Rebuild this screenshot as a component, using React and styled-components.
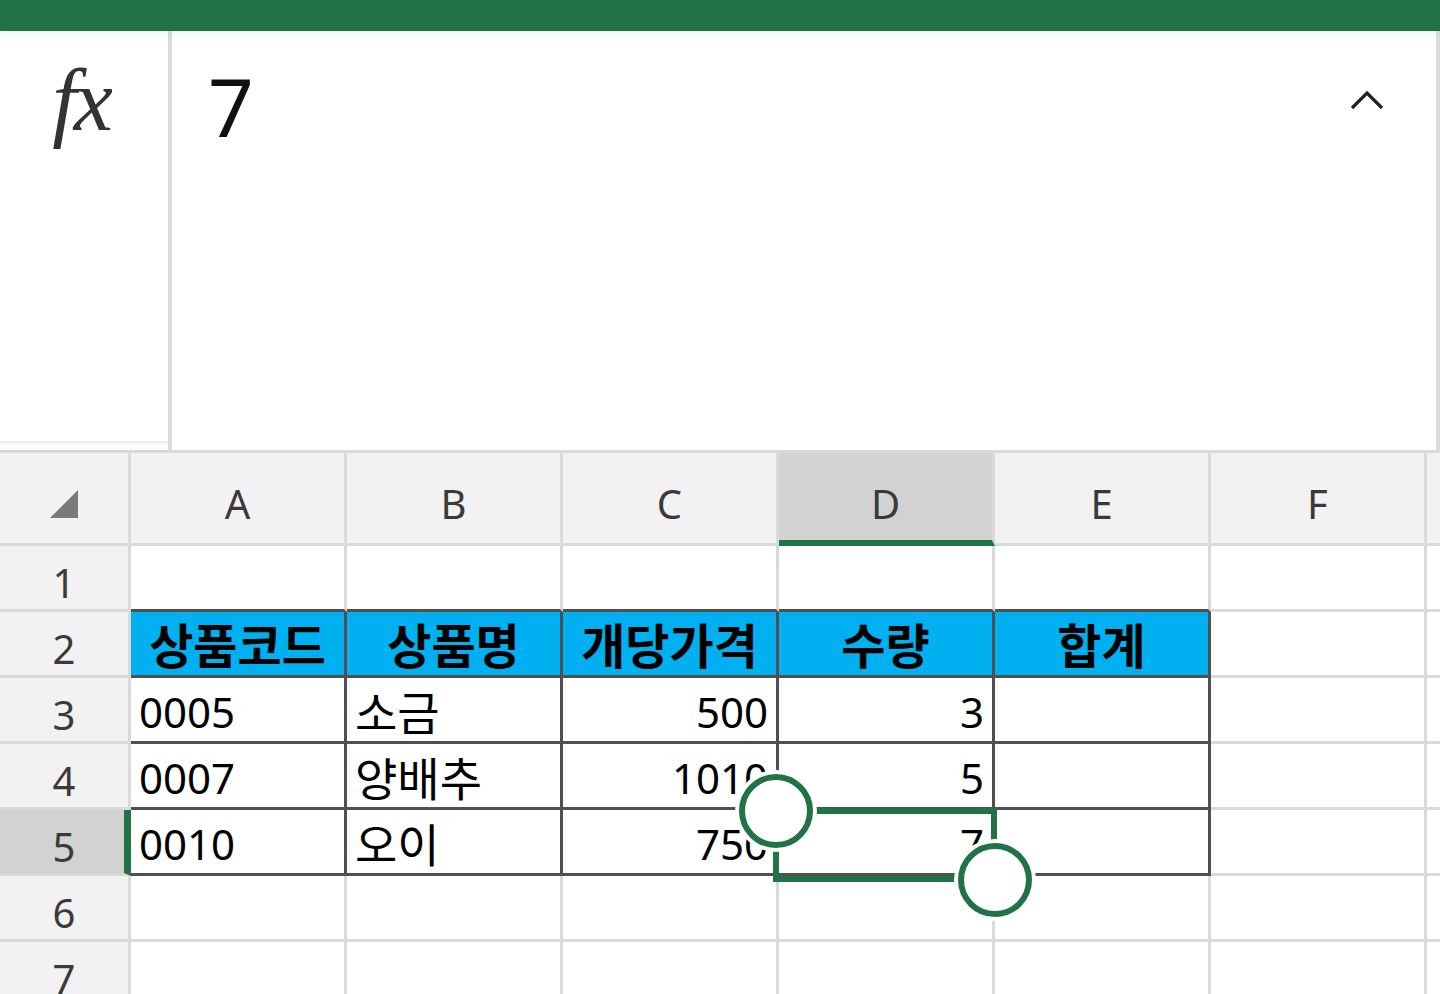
import React from "react";
import styled, { createGlobalStyle } from "styled-components";

const GREEN = "#217346";
const GRID = "#dadada";
const DARK = "#505050";
const HEAD_BG = "#f2f2f2";
const ACTIVE_BG = "#d2d2d2";

const GlobalStyle = createGlobalStyle`
  html, body {
    margin: 0;
    padding: 0;
    width: 1440px;
    height: 994px;
    overflow: hidden;
    background: #ffffff;
    font-family: "Noto Sans", "Noto Sans CJK KR", sans-serif;
  }
  * { box-sizing: border-box; }
`;

const Page = styled.div`
  width: 1440px;
  height: 994px;
  display: flex;
  flex-direction: column;
  overflow: hidden;
`;

const TopBar = styled.div`
  height: 31px;
  flex: none;
  background: ${GREEN};
  position: relative;
  z-index: 2;
  box-shadow: 0 2px 10px rgba(0, 0, 0, 0.07);
`;

const FormulaBar = styled.div`
  height: 419px;
  flex: none;
  display: flex;
  background: #fcfcfc;
`;

const FxPanel = styled.div`
  width: 168px;
  height: 410px;
  background: #ffffff;
  box-shadow: 0 2px 2px rgba(0, 0, 0, 0.08);
  display: flex;
  justify-content: center;
  padding-top: 26px;
`;

const FxLabel = styled.span`
  font-family: "Liberation Serif", "DejaVu Serif", serif;
  font-style: italic;
  font-size: 88px;
  line-height: 88px;
  color: #333333;
  letter-spacing: -3px;
  padding-right: 6px;
`;

const Divider = styled.div`
  width: 4px;
  background: #dcdcdc;
`;

const FormulaInput = styled.div`
  flex: 1;
  background: #ffffff;
  border-right: 4px solid #dcdcdc;
  display: flex;
  justify-content: space-between;
  align-items: flex-start;
  padding: 35px 52px 0 36px;
`;

const FormulaValue = styled.span`
  font-size: 80px;
  line-height: 80px;
  color: #111111;
`;

const Chevron = styled.svg`
  margin-top: 24px;
  width: 34px;
  height: 20px;
`;

const Sheet = styled.div`
  position: relative;
  flex: 1;
  border-top: 3px solid ${GRID};
  display: grid;
  grid-template-columns: 131px repeat(6, 216px) 1fr;
  grid-template-rows: 93px;
  grid-auto-rows: 66px;
  background: #ffffff;
`;

const Corner = styled.div`
  background: ${HEAD_BG};
  border-right: 3px solid ${GRID};
  border-bottom: 3px solid ${GRID};
  display: flex;
  align-items: center;
  justify-content: center;
  padding: 12px 0 0 0;
`;

const CornerTriangle = styled.svg`
  width: 28px;
  height: 28px;
`;

const ColHeader = styled.div`
  background: ${(p) => (p.$active ? ACTIVE_BG : HEAD_BG)};
  border-right: 3px solid ${GRID};
  border-bottom: ${(p) => (p.$active ? `6px solid ${GREEN}` : `3px solid ${GRID}`)};
  display: flex;
  align-items: center;
  justify-content: center;
  padding-top: ${(p) => (p.$active ? 15 : 12)}px;
  font-size: 40px;
  line-height: 48px;
  color: #3a3a3a;
`;

const RowHeader = styled.div`
  background: ${(p) => (p.$active ? ACTIVE_BG : HEAD_BG)};
  border-right: ${(p) => (p.$active ? `7px solid ${GREEN}` : `3px solid ${GRID}`)};
  border-bottom: 3px solid ${GRID};
  display: flex;
  align-items: center;
  justify-content: center;
  padding: 10px 0 0 ${(p) => (p.$active ? 4 : 0)}px;
  font-size: 40px;
  line-height: 48px;
  color: #3a3a3a;
`;

const Cell = styled.div`
  background: ${(p) => (p.$head ? "#00b0f0" : "#ffffff")};
  border-right: 3px solid ${(p) => (p.$darkRight ? DARK : GRID)};
  border-bottom: 3px solid ${(p) => (p.$darkBottom ? DARK : GRID)};
  display: flex;
  align-items: center;
  justify-content: ${(p) =>
    p.$align === "right" ? "flex-end" : p.$align === "center" ? "center" : "flex-start"};
  padding: 4px 8px 0 8px;
  font-size: ${(p) => (p.$head ? 48 : p.$ko ? 46 : 42)}px;
  font-weight: ${(p) => (p.$head ? 700 : 400)};
  line-height: 56px;
  color: #000000;
  white-space: nowrap;
  overflow: visible;
`;

const SelectionBox = styled.div`
  position: absolute;
  left: 773px;
  top: 355px;
  width: 224px;
  height: 74px;
  border: 6px solid ${GREEN};
  pointer-events: none;
`;

const Handle = styled.div`
  position: absolute;
  left: ${(p) => p.$cx - 37}px;
  top: ${(p) => p.$cy - 37}px;
  width: 74px;
  height: 74px;
  border-radius: 50%;
  border: 6px solid ${GREEN};
  background: #ffffff;
  box-shadow: 0 0 0 4px #ffffff;
`;

const columns = ["A", "B", "C", "D", "E", "F", ""];

const data = {
  2: [
    { v: "상품코드", a: "center" },
    { v: "상품명", a: "center" },
    { v: "개당가격", a: "center" },
    { v: "수량", a: "center" },
    { v: "합계", a: "center" },
  ],
  3: [
    { v: "0005" },
    { v: "소금", ko: true },
    { v: "500", a: "right" },
    { v: "3", a: "right" },
    { v: "" },
  ],
  4: [
    { v: "0007" },
    { v: "양배추", ko: true },
    { v: "1010", a: "right" },
    { v: "5", a: "right" },
    { v: "" },
  ],
  5: [
    { v: "0010" },
    { v: "오이", ko: true },
    { v: "750", a: "right" },
    { v: "7", a: "right" },
    { v: "" },
  ],
};

const rows = [1, 2, 3, 4, 5, 6, 7];

export default function App() {
  return (
    <Page>
      <GlobalStyle />
      <TopBar />
      <FormulaBar>
        <FxPanel>
          <FxLabel>fx</FxLabel>
        </FxPanel>
        <Divider />
        <FormulaInput>
          <FormulaValue>7</FormulaValue>
          <Chevron viewBox="0 0 34 20">
            <polyline
              points="2,18 17,3 32,18"
              fill="none"
              stroke="#222222"
              strokeWidth="3.2"
            />
          </Chevron>
        </FormulaInput>
      </FormulaBar>
      <Sheet>
        <Corner>
          <CornerTriangle viewBox="0 0 28 28">
            <polygon points="28,0 28,28 0,28" fill="#7a7a7a" />
          </CornerTriangle>
        </Corner>
        {columns.map((c, i) => (
          <ColHeader key={"h" + i} $active={c === "D"}>
            {c}
          </ColHeader>
        ))}
        {rows.map((r) => (
          <React.Fragment key={r}>
            <RowHeader $active={r === 5}>{r}</RowHeader>
            {columns.map((c, ci) => {
              const inTable = r >= 2 && r <= 5 && ci <= 4;
              const cell = data[r] && data[r][ci];
              return (
                <Cell
                  key={r + "-" + ci}
                  $head={r === 2 && ci <= 4}
                  $ko={cell && cell.ko}
                  $darkRight={inTable}
                  $darkBottom={inTable || (r === 1 && ci <= 4)}
                  $align={cell ? cell.a : undefined}
                >
                  {cell ? cell.v : ""}
                </Cell>
              );
            })}
          </React.Fragment>
        ))}
        <SelectionBox />
        <Handle $cx={776} $cy={358} />
        <Handle $cx={995} $cy={427} />
      </Sheet>
    </Page>
  );
}
